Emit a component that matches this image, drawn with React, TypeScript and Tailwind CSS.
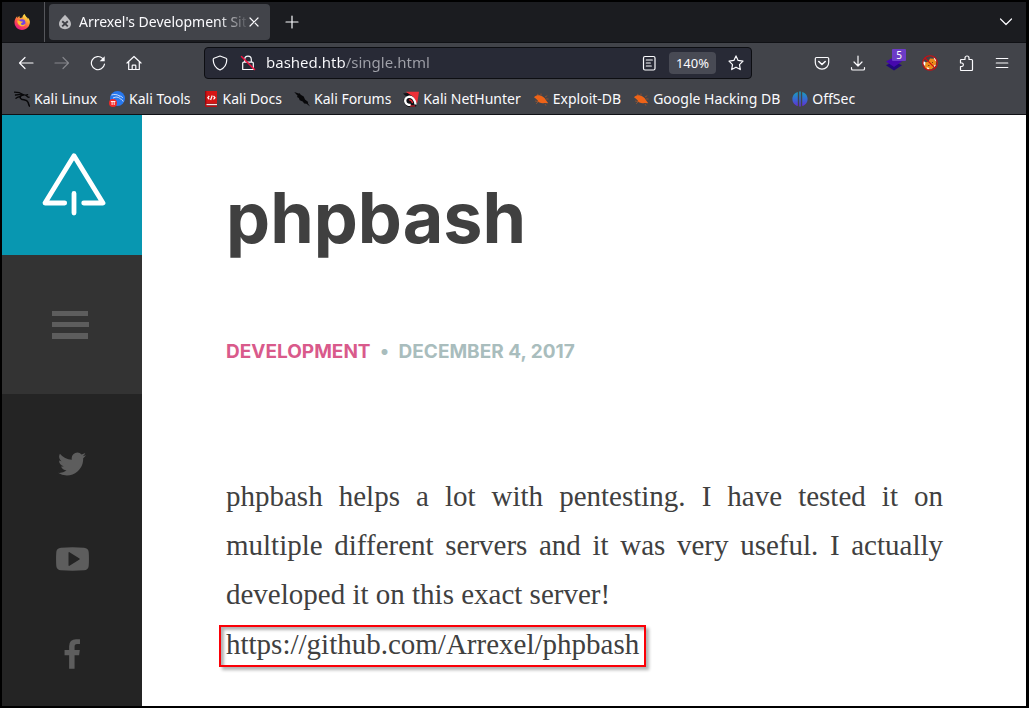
import type { ReactNode } from "react";

function FirefoxLogo() {
  return (
    <svg viewBox="0 0 16 16" className="size-4" aria-hidden="true">
      <defs>
        <linearGradient id="fx-flame" x1="0.85" y1="0.05" x2="0.25" y2="1">
          <stop offset="0" stopColor="#fff44f" />
          <stop offset="0.35" stopColor="#ffa436" />
          <stop offset="0.65" stopColor="#ff4a4f" />
          <stop offset="1" stopColor="#e31587" />
        </linearGradient>
      </defs>
      <path
        fill="url(#fx-flame)"
        d="M15.5 6.2c-.4-1.200-1.200-2.100-2-2.600.3.600.5 1.200.5 1.600C13.200 3 11.300 2.300 10.700 0 8.900 1 8.400 2.700 8.400 3.500c-.9 0-1.700.3-2.300.7-.5-.3-.6-1.300-.5-2.100-.9.400-1.600 1.200-2 1.900-.4-.3-.4-1.300-.3-1.700C2.200 2.900.9 5.300.5 7.200.1 12 3.400 15.900 8 15.900c4.500 0 7.900-3.600 7.900-7.900 0-.6-.1-1.200-.4-1.800z"
      />
      <circle cx="8" cy="8.600" r="3.400" fill="#7543e3" />
      <path fill="#ffbd30" d="M3.300 6.500c1.600-.3 2.800.2 3.700 1 .8 0 1.800-.1 1.900.3.100.6-1.400 1.100-1.900 1.700-.3.900.8 1.700 2 1.500 1.200-.2 1.800-.9 2.500-.6-1 1.900-3.200 2.400-5 1.600-2.200-.9-3.400-3.300-3.200-5.500z" />
    </svg>
  );
}

function DropIcon() {
  return (
    <svg viewBox="0 0 16 16" className="size-4 shrink-0" aria-hidden="true">
      <path fill="#bdbdc0" d="M8 .8C10 3.500 14 6.200 14 10c0 2.900-2.600 5.200-6 5.200S2 12.900 2 10C2 6.200 6 3.500 8 .8z" />
      <path stroke="#3e3f45" strokeWidth="1.900" fill="none" d="M5.200 7.200l5.600 5.200M10.800 7.200l-5.600 5.200" />
    </svg>
  );
}

function Line({ children, dim }: { children: ReactNode; dim?: boolean }) {
  return (
    <svg
      viewBox="0 0 16 16"
      className={dim ? "size-4 text-[#85868b]" : "size-4 text-[#fbfbfe]"}
      fill="none"
      stroke="currentColor"
      strokeWidth="1.200"
      strokeLinecap="round"
      strokeLinejoin="round"
      aria-hidden="true"
    >
      {children}
    </svg>
  );
}

function ToolButton({ label, children }: { label: string; children: ReactNode }) {
  return (
    <button type="button" aria-label={label} className="relative flex h-8 w-9 shrink-0 items-center justify-center">
      {children}
    </button>
  );
}

function KaliDragon() {
  return (
    <svg viewBox="0 0 16 16" className="size-4" fill="none" stroke="#08080a" strokeLinecap="round" aria-hidden="true">
      <path strokeWidth="1.300" d="M.5 1.200c3 0 6 .6 8.500 2.300M1.500 4c2.800-.7 5.200-.6 7.500.2" />
      <path strokeWidth="1.500" d="M9 3.800C6 4.600 5.300 7 7.500 8.200c2.300 1 5.500.5 6.500 3 .5 1.300.7 2.700 1.500 4" />
      <path strokeWidth="1.400" d="M9 3.600c2 .1 3.600.5 4.700 2.300l1.300.3M2 7.200c1.200-1 2.500-1.500 4-1.500M12 4.200l1.600-.5" />
    </svg>
  );
}

function KaliTools() {
  return (
    <svg viewBox="0 0 16 16" className="size-4" aria-hidden="true">
      <circle cx="8.500" cy="7.500" r="7.500" fill="#2777ed" />
      <path d="M2.500 4c3-1 6-.5 8 1M4 7c3-1.500 5-1 6.500.2 1.500 1.300 2.700.8 3.700 3.300M10 5c2 0 3 .6 3.700 2" fill="none" stroke="#dbe8fd" strokeWidth="0.900" />
      <circle cx="4" cy="12" r="4" fill="#f12828" />
      <path d="M1.800 10.500h4.600M3.100 10.500v3.500M5.200 10.500v3.500" stroke="#fff" strokeWidth="0.900" />
    </svg>
  );
}

function KaliDocs() {
  return (
    <svg viewBox="0 0 16 16" className="size-4" aria-hidden="true">
      <path fill="#d51515" d="M2.500 0H14v12.800H2z" />
      <path fill="#98090f" d="M2 0h1.300v13H2z" />
      <path fill="#f3e7e7" d="M3 13h11v1.300H3z" />
      <path fill="#b90d12" d="M2 13h1.500v1.400H14V16H3.500C2.500 16 2 15.300 2 14.500z" />
      <path fill="none" stroke="#fff" strokeWidth="1.200" d="M6.300 5L4.800 6.700l1.500 1.700M10.500 5L12 6.700l-1.500 1.700M9.200 4.500L7.600 9" />
    </svg>
  );
}

function KaliForums() {
  return (
    <svg viewBox="0 0 16 16" className="size-4" aria-hidden="true">
      <path fill="#08080a" d="M.2.900l4.500 1.700 1-.3 1 1.500 3 1.700 1.300 3 3.200 2.500-.5 1 2.300 3.500-3.500-2.700-2.300-.3-1.500-2-3-1.200-.9-2.200L3 6l.6-1.200L.2.900z" />
    </svg>
  );
}

function NetHunter() {
  return (
    <svg viewBox="0 0 16 16" className="size-4" aria-hidden="true">
      <path fill="#ee3038" d="M3 .7h13l-1.800 11.500L9 7z" />
      <path fill="#111116" d="M0 2.500L4.500 2l5.500 3.500L13.500 15l-2 1H5L1.500 13 .5 8l3-2.500z" />
      <path fill="none" stroke="#fff" strokeWidth="2.300" d="M12.500 13.500C12 8.500 9 5.300 5.500 5.800 2.500 6.300 1.500 9.300 2.700 11.800c1 2 3.500 2.500 5 1.700" />
      <path fill="none" stroke="#ec2731" strokeWidth="1.200" d="M6 9c1.700-.4 3 .8 3.600 3M7 15h5" />
    </svg>
  );
}

function ExploitBug() {
  return (
    <svg viewBox="0 0 16 16" className="size-4" aria-hidden="true">
      <path stroke="#a7572b" strokeWidth="0.700" fill="none" d="M1 6.500l4-2M4 3l3 2M2 10l5 1M12 13l1 1.700M12 6l2.300-1.300M13 8h2.500M8 4.500L8 2.500M6 10l-3 3" />
      <path fill="#ee6318" d="M1.200 6.200C3 4.200 5.500 3.800 8 4.800c2.200.9 4 2.200 4.700 4l2.500 3.400-3.700-.2C8.500 12.800 6 11.800 4.300 9z" />
    </svg>
  );
}

function OffSec() {
  return (
    <svg viewBox="0 0 16 16" className="size-4" aria-hidden="true">
      <defs>
        <linearGradient id="offsec" gradientUnits="userSpaceOnUse" x1="0" y1="0" x2="0" y2="16">
          <stop offset="0" stopColor="#16a3b5" />
          <stop offset="0.500" stopColor="#356bd3" />
          <stop offset="1" stopColor="#6728cf" />
        </linearGradient>
      </defs>
      <path fill="url(#offsec)" d="M5.800.9v14.200C2.500 14.200.4 11.400.4 8S2.500 1.800 5.800.9zM7.200.5h1.600v15H7.200zM10.200.9c3.300.9 5.400 3.700 5.400 7.100s-2.100 6.200-5.400 7.100z" />
    </svg>
  );
}

const bookmarks = [
  { name: "Kali Linux", icon: <KaliDragon /> },
  { name: "Kali Tools", icon: <KaliTools /> },
  { name: "Kali Docs", icon: <KaliDocs /> },
  { name: "Kali Forums", icon: <KaliForums /> },
  { name: "Kali NetHunter", icon: <NetHunter /> },
  { name: "Exploit-DB", icon: <ExploitBug /> },
  { name: "Google Hacking DB", icon: <ExploitBug /> },
  { name: "OffSec", icon: <OffSec /> },
];

function TabStrip() {
  return (
    <div className="flex h-10 items-center bg-[#1b1c20]">
      <button type="button" aria-label="Firefox View" className="flex h-10 w-[43px] items-center justify-center border-r border-[#55565b] pr-0.5">
        <FirefoxLogo />
      </button>
      <div className="ml-1 flex h-9 w-[221px] items-center rounded-sm bg-[#42444a] px-2">
        <DropIcon />
        <span className="min-w-0 flex-1 overflow-hidden pl-1.5 whitespace-nowrap text-[#fbfbfe] [mask-image:linear-gradient(to_right,black_84%,transparent_102%)]">
          Arrexel's Development Sit
        </span>
        <button type="button" aria-label="Close tab" className="flex size-4 items-center justify-center">
          <Line><path d="M4 4l8 8M12 4l-8 8" /></Line>
        </button>
      </div>
      <button type="button" aria-label="New tab" className="ml-1 flex size-9 items-center justify-center">
        <Line><path d="M8 2v12M2 8h12" /></Line>
      </button>
      <button type="button" aria-label="List all tabs" className="ml-auto mr-0.5 flex size-9 items-center justify-center">
        <Line><path d="M2.500 5L8 10.500 13.500 5" /></Line>
      </button>
    </div>
  );
}

function NavBar() {
  return (
    <div className="flex h-10 items-center px-1.5">
      <ToolButton label="Back"><Line><path d="M15 8H1.500M7 2.500L1.500 8 7 13.500" /></Line></ToolButton>
      <ToolButton label="Forward"><Line dim><path d="M1 8h13.500M9 2.500L14.500 8 9 13.500" /></Line></ToolButton>
      <ToolButton label="Reload">
        <Line>
          <path d="M14.500 9.200A6.600 6.600 0 1 1 12.600 3.400" />
          <path d="M14.700 1.300v5h-5z" fill="currentColor" stroke="none" />
        </Line>
      </ToolButton>
      <ToolButton label="Home">
        <Line>
          <path d="M1 8l7-6.500L15 8M2.700 6.700v7.800h10.600V6.700" />
          <path d="M6.200 14.300v-3.600q0-.6.6-.6h2.400q.6 0 .6.6v3.600" />
        </Line>
      </ToolButton>

      <div className="mx-[52px] flex h-8 min-w-0 flex-1 items-center rounded-sm border border-[#0d0e12] bg-[#282a36] px-[7px]">
        <Line><path d="M8 1l6 2.300c.7.300.8.800.8 1.500C14.700 10 12 13.300 8 15 4 13.300 1.300 10 1.200 4.800c0-.7.1-1.200.8-1.500z" /></Line>
        <span className="ml-3">
          <Line>
            <path d="M4.700 7V4.500a3.300 3.300 0 0 1 6.600 0V7M2.700 14.500V8.200q0-1 1-1h8.600q1 0 1 1v6.300z" />
            <path d="M1.500 1.500l13 13" stroke="#f0123f" strokeWidth="1.500" />
          </Line>
        </span>
        <input
          type="text"
          aria-label="Address"
          defaultValue="bashed.htb/single.html"
          className="ml-2.5 min-w-0 flex-1 bg-[linear-gradient(to_right,#fbfbfe_80px,#a0a1a9_80px)] bg-clip-text text-[15px] text-transparent outline-none"
        />
        <Line>
          <rect x="2.500" y="1.500" width="11.500" height="13.500" rx="1.500" />
          <path d="M5.300 5h6M5.300 8h4M5.300 11h5" />
        </Line>
        <button type="button" className="ml-3 h-[22px] w-[47px] rounded-sm bg-[#484a54] text-[13px] leading-[22px] text-[#fbfbfe]">
          140%
        </button>
        <button type="button" aria-label="Bookmark this page" className="ml-3">
          <Line><path d="M8 .9l2.100 4.500 4.900.7-3.500 3.500.8 5L8 12.200l-4.300 2.400.8-5L1 6.100l4.900-.7z" /></Line>
        </button>
      </div>

      <ToolButton label="Save to Pocket">
        <Line>
          <path d="M2.500 2.500h11q1.200 0 1.200 1.200V7.500a6.700 6.700 0 0 1-13.400 0V3.700q0-1.200 1.200-1.200z" />
          <path d="M4.800 6.500L8 9.500l3.200-3" strokeWidth="1.600" />
        </Line>
      </ToolButton>
      <ToolButton label="Downloads">
        <Line><path d="M8 1v9.500M4 7l4 4 4-4M1.500 12.500v1.200q0 1.300 1.300 1.300h10.400q1.300 0 1.300-1.300v-1.200" /></Line>
      </ToolButton>
      <ToolButton label="Wappalyzer, 5 results">
        <svg viewBox="0 0 16 16" className="size-4" aria-hidden="true">
          <path fill="#22087c" d="M0 10.200l8-4 8 4L8 15.600z" />
          <path fill="#4608ad" d="M0 6.500L8 2l8 4.500-8 5.500z" />
        </svg>
        <span className="absolute top-0.5 left-4 flex h-3 w-3.5 items-center justify-center rounded-[1px] bg-[#6c3bc7] text-[10px] leading-3 text-white">5</span>
      </ToolButton>
      <ToolButton label="FoxyProxy">
        <svg viewBox="0 0 16 16" className="size-4" aria-hidden="true">
          <path fill="#ec8b1c" d="M3 7.500l3.500-1L8 3.500l4.500.3 1.700 3-.7 4-4 3.500-4.500.3L2.500 12z" />
          <path fill="#fff" d="M1.300 6l2.200 1.300L3 11 1.200 9zM11.500 2.500l2 1 1.300 3.300-1.800-1.300zM4.500 12.300l3 .7-1.500 1.800zM11.500 11l2.300-1.500-1.300 3.300z" />
          <path stroke="#77400e" d="M6 10.500h1.500M10 8l1-1" />
          <circle cx="8" cy="8" r="7.300" fill="none" stroke="#d20b10" strokeWidth="1.100" />
          <path stroke="#d20b10" strokeWidth="1.200" d="M2.800 2.800l10.400 10.400" />
        </svg>
      </ToolButton>
      <ToolButton label="Extensions">
        <Line>
          <path d="M3.300 4.500H7V3a2 2 0 0 1 4 0v1.500h2.500q1 0 1 1V14.500q0 1-1 1H3.300q-.8 0-.8-.8V11.500h1.500a1.800 1.800 0 0 0 0-3.500h-1.500V5.300q0-.8.8-.8z" />
        </Line>
      </ToolButton>
      <ToolButton label="Open application menu"><Line><path d="M2.300 3.500h11.500M2.300 8h11.500M2.300 12.500h11.500" /></Line></ToolButton>
    </div>
  );
}

function BookmarksBar() {
  return (
    <nav aria-label="Bookmarks" className="flex h-8 items-center gap-3 border-b border-[#101115] pl-3 text-[#fbfbfe]">
      {bookmarks.map((b) => (
        <a key={b.name} href="#" className="flex items-center gap-1 whitespace-nowrap">
          {b.icon}
          {b.name}
        </a>
      ))}
    </nav>
  );
}

function Sidebar() {
  return (
    <aside className="flex w-[140px] shrink-0 flex-col bg-[#242424] text-[#5d5d5d]">
      <a href="#" aria-label="Home page" className="flex h-[140px] items-center justify-center bg-[#0897b1]">
        <svg viewBox="-4 0 68 64" className="h-16 w-[68px]" fill="none" stroke="#fff" strokeWidth="4.800" strokeLinecap="round" strokeLinejoin="round" aria-hidden="true">
          <path d="M22.700 50H3L32 2.700 61 50H41.700M32 40.500v19.500" />
        </svg>
      </a>
      <button type="button" aria-label="Menu" className="flex h-[139px] items-center justify-center bg-[#333333]">
        <svg viewBox="0 0 40 28" className="h-7 w-10" fill="#5d5d5d" aria-hidden="true">
          <path d="M0 0h36v5H0zM0 11h37v5H0zM0 22h36v6H0z" />
        </svg>
      </button>
      <div className="flex flex-col items-center gap-[63px] pt-[54px]">
        <a href="#" aria-label="Twitter">
          <svg viewBox="0 0 1792 1792" className="size-8" fill="currentColor" aria-hidden="true">
            <path d="M1684 408q-67 98-162 167 1 14 1 42 0 130-38 259.500t-115.500 248.500-184.500 210.500-258 146-323 54.500q-271 0-496-145 35 4 78 4 225 0 401-138-105-2-188-64.500t-114-159.500q33 5 61 5 43 0 85-11-112-23-185.500-111.500t-73.500-205.500v-4q68 38 146 41-66-44-105-115t-39-154q0-88 44-163 121 149 294.500 238.500t371.500 99.500q-8-38-8-74 0-134 94.500-228.500t228.500-94.500q140 0 236 102 109-21 205-78-37 115-142 178 93-10 186-50z" />
          </svg>
        </a>
        <a href="#" aria-label="YouTube">
          <svg viewBox="0 0 33 32" className="h-8 w-[33px]" fill="currentColor" aria-hidden="true">
            <path fillRule="evenodd" d="M5 4.700q11.500-.8 23 0 4.300.3 4.700 4.300.5 7 0 14-.4 4-4.700 4.300-11.500.8-23 0Q.7 27 .3 23q-.5-7 0-14 .4-4 4.700-4.300zM12.500 9.400v13.200q.4.500 1 .2l10-6.200q.4-.6 0-1.200l-10-6.200q-.6-.300-1 .2z" />
          </svg>
        </a>
        <a href="#" aria-label="Facebook">
          <svg viewBox="0 0 1792 1792" className="size-8" fill="currentColor" aria-hidden="true">
            <path d="M1343 76v264h-157q-86 0-116 36t-30 108v189h293l-39 296h-254v759h-306v-759h-255v-296h255v-218q0-186 104-288.500t277-102.500q147 0 228 12z" />
          </svg>
        </a>
      </div>
    </aside>
  );
}

function Article() {
  return (
    <main className="min-w-0 flex-1 bg-white pt-[61px] pr-[83px] pl-[84px] text-[#404040]">
      <h1 className="font-['Inter',sans-serif] text-[70px] leading-[84px] font-bold">phpbash</h1>
      <div className="mt-[78px] flex items-center font-['Inter',sans-serif] text-[19px] leading-7 font-bold">
        <a href="#" className="text-[#d95a8b]">DEVELOPMENT</a>
        <span className="w-7 text-center text-[#a9bdbd]">•</span>
        <time dateTime="2017-12-04" className="text-[#a9bdbd]">DECEMBER 4, 2017</time>
      </div>
      <div className="mt-[106px] font-['Liberation_Serif',serif] text-[29px]">
        <p className="text-justify leading-[49px]">
          phpbash helps a lot with pentesting. I have tested it on multiple different servers and it was very useful. I actually developed it on this exact server!
        </p>
        <a
          href="#"
          className="mt-1.5 -ml-[7px] block w-fit border-2 border-[#fb0007] px-[5px] pb-1 leading-[34px] shadow-[3px_3px_3px_rgba(0,0,0,0.3),inset_3px_3px_3px_rgba(0,0,0,0.3)]"
        >
          https://github.com/Arrexel/phpbash
        </a>
      </div>
    </main>
  );
}

export default function App() {
  return (
    <div className="flex min-h-screen flex-col border-2 border-r-[3px] border-black bg-[#42444a] font-['Noto_Sans',sans-serif] text-sm">
      <header>
        <TabStrip />
        <div className="border-t border-[#101115]">
          <NavBar />
          <BookmarksBar />
        </div>
      </header>
      <div className="flex flex-1">
        <Sidebar />
        <Article />
      </div>
    </div>
  );
}
